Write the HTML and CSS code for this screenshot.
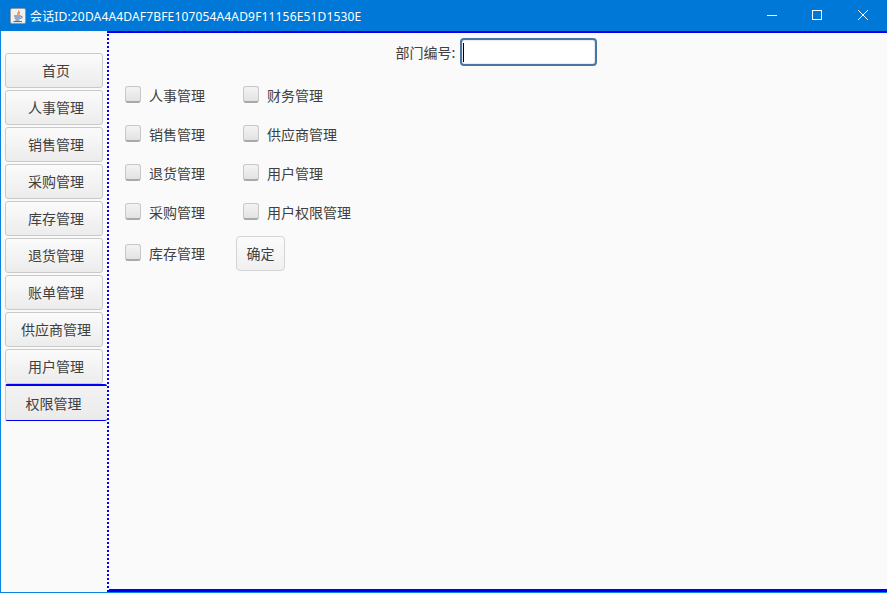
FILE: index.html
```html
<!DOCTYPE html>
<html lang="zh">
<head>
<meta charset="utf-8">
<title>会话</title>
<link rel="stylesheet" href="styles.css">
</head>
<body>
<div class="window">
  <header class="titlebar">
    <svg class="app-icon" width="16" height="16" viewBox="0 0 16 16">
      <rect x="0.5" y="0.5" width="15" height="15" rx="1.5" fill="#f1f1ee" stroke="#8b98a8"/>
      <path d="M8.5 2.5c1.5 1.5-1.8 2.5-.6 4.4M10 4.2c-1.8.8-.8 1.8-.9 2.6" fill="none" stroke="#d9682a" stroke-width="1"/>
      <path d="M4 8h6.5M4.6 10h5.4M5.4 12h4M3.5 13.6h8.5M10.5 8.2c2.2-.4 2.2 1.9-.3 2.2" fill="none" stroke="#41638f" stroke-width="1"/>
    </svg>
    <span class="title">会话ID:20DA4A4DAF7BFE107054A4AD9F11156E51D1530E</span>
    <div class="controls">
      <span class="ctl"><svg width="10" height="10" viewBox="0 0 10 10"><path d="M0 5.5h10" stroke="#fff" stroke-width="1" fill="none"/></svg></span>
      <span class="ctl ctl-mid"><svg width="10" height="10" viewBox="0 0 10 10"><rect x=".5" y=".5" width="9" height="9" stroke="#fff" stroke-width="1" fill="none"/></svg></span>
      <span class="ctl"><svg width="10" height="10" viewBox="0 0 10 10"><path d="M0 0l10 10M10 0L0 10" stroke="#fff" stroke-width="1" fill="none"/></svg></span>
    </div>
  </header>
  <div class="body">
    <nav class="sidebar">
      <button class="nav-btn">首页</button>
      <button class="nav-btn">人事管理</button>
      <button class="nav-btn">销售管理</button>
      <button class="nav-btn">采购管理</button>
      <button class="nav-btn">库存管理</button>
      <button class="nav-btn">退货管理</button>
      <button class="nav-btn">账单管理</button>
      <button class="nav-btn">供应商管理</button>
      <button class="nav-btn">用户管理</button>
      <button class="nav-btn active">权限管理</button>
    </nav>
    <main class="main">
      <div class="dept">
        <label class="dept-label">部门编号:</label>
        <div class="field"><span class="caret"></span></div>
      </div>
      <div class="form">
        <div class="row row-a">
          <label class="check c1"><span class="box"></span>人事管理</label>
          <label class="check"><span class="box"></span>财务管理</label>
        </div>
        <div class="row row-b">
          <label class="check c1"><span class="box"></span>销售管理</label>
          <label class="check"><span class="box"></span>供应商管理</label>
        </div>
        <div class="row row-b">
          <label class="check c1"><span class="box"></span>退货管理</label>
          <label class="check"><span class="box"></span>用户管理</label>
        </div>
        <div class="row row-b">
          <label class="check c1"><span class="box"></span>采购管理</label>
          <label class="check"><span class="box"></span>用户权限管理</label>
        </div>
        <div class="row row-c">
          <label class="check c0"><span class="box"></span>库存管理</label>
          <button class="ok">确定</button>
        </div>
      </div>
    </main>
  </div>
</div>
</body>
</html>
```
FILE: styles.css
```css
* { box-sizing: border-box; }
html, body { margin: 0; padding: 0; }
body {
  width: 887px;
  height: 593px;
  overflow: hidden;
  font-family: "Noto Sans CJK SC", "Noto Sans", sans-serif;
  font-size: 14px;
  color: #404040;
}
.window {
  width: 887px;
  height: 593px;
  display: flex;
  flex-direction: column;
  border: 1px solid #0a84e0;
  border-top: 0;
  background: #fafafa;
}
.titlebar {
  height: 31px;
  margin: 0 -1px;
  flex: none;
  display: flex;
  align-items: center;
  padding-left: 10px;
  background: #0078d7;
  color: #fff;
  font-family: "Noto Sans", "Noto Sans CJK SC", sans-serif;
  font-size: 12px;
}
.app-icon { flex: none; }
.title { margin-left: 4px; white-space: nowrap; letter-spacing: 0.16px; }
.controls { margin-left: auto; display: flex; padding-right: 1px; }
.ctl {
  width: 45px;
  height: 31px;
  padding: 10px 0 0 17px;
  display: block;
}
.ctl svg { display: block; }
.ctl-mid { width: 46px; }
.body { flex: 1; display: flex; min-height: 0; }
.sidebar {
  width: 106px;
  flex: none;
  padding: 22px 0 0 4px;
  display: flex;
  flex-direction: column;
  gap: 2px;
}
.nav-btn {
  width: 98px;
  height: 35px;
  padding: 0 0 2px 4px;
  font: inherit;
  color: #404040;
  border: 1px solid #c9c9c9;
  border-radius: 3px;
  background: linear-gradient(#fbfbfb, #ececec);
}
.nav-btn.active {
  width: 102px;
  height: 37px;
  margin-top: -2px;
  padding: 0 6px 0 0;
  border: 0;
  border-top: 2px solid #0000f0;
  border-bottom: 1px solid #0000f0;
  border-left: 1px solid #c9c9c9;
  border-radius: 2px;
  background: linear-gradient(#f2f2f2, #ebebeb);
}
.main {
  flex: 1;
  border-top: 2px solid #0000f0;
  border-bottom: 3px solid #0000f0;
  border-left: 2px dotted #0000f0;
  margin-right: -1px;
  background: #fafafa;
}
.dept {
  display: flex;
  align-items: center;
  justify-content: center;
  gap: 5px;
  height: 28px;
  margin-top: 5px;
  padding-right: 3px;
}
.dept-label { font-size: 14px; }
.field {
  width: 137px;
  height: 28px;
  border: 2px solid #4b74a3;
  border-radius: 4px;
  background: #fff;
  box-shadow: inset 0 0 2px #a9bdd4;
  padding: 3px 1px;
}
.caret { display: block; width: 1px; height: 19px; background: #000; }
.form { padding: 15px 0 0 16px; }
.row { display: flex; align-items: center; }
.row-a { height: 28px; }
.row-b { height: 28px; margin-top: 11px; }
.row-c { height: 35px; margin-top: 10px; }
.check { display: flex; align-items: center; font-size: 14px; }
.c1 { width: 118px; }
.c0 { width: 111px; margin-bottom: 2px; }
.box {
  width: 16px;
  height: 17px;
  margin: 0 8px 2px 0;
  border: 1px solid #c8c8c8;
  border-bottom: 2px solid #a9a9a9;
  border-radius: 3px;
  background: linear-gradient(#f3f3f3, #e3e3e3);
}
.c0 .box { margin-bottom: 0; }
.ok {
  width: 49px;
  height: 35px;
  padding: 0 0 2px;
  font: inherit;
  font-size: 14px;
  color: #404040;
  border: 1px solid #d4d4d4;
  border-radius: 4px;
  background: linear-gradient(#fbfbfb, #f0f0f0);
}
```
